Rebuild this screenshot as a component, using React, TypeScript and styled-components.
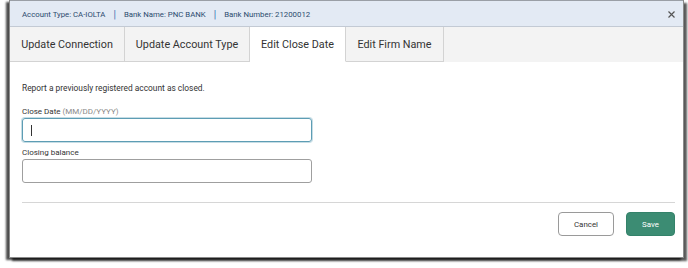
import React from "react";
import styled, { createGlobalStyle } from "styled-components";

const Global = createGlobalStyle`
  html, body { margin: 0; padding: 0; background: #ffffff; }
  body { font-family: Roboto, "Liberation Sans", Arial, sans-serif; }
  * { box-sizing: border-box; }
`;

const Stage = styled.div`
  width: 688px;
  height: 268px;
  padding-left: 9px;
  overflow: hidden;
`;

const Modal = styled.div`
  width: 675px;
  height: 258px;
  background: #ffffff;
  border: 1px solid #8a8a8a;
  border-top: none;
  box-shadow: -3px 2px 2px rgba(0, 0, 0, 0.7), 3px 3px 2px rgba(0, 0, 0, 0.65);
  display: flex;
  flex-direction: column;
`;

const InfoBar = styled.div`
  height: 27px;
  flex: none;
  background: #e3eaf4;
  border-top: 1px solid #9a9fa6;
  border-bottom: 1px solid #c3cad4;
  display: flex;
  align-items: center;
  padding: 1px 7px 0 12px;
  font-size: 7.8px;
  color: #2c4a6e;
`;

const InfoItem = styled.span`
  white-space: nowrap;
`;

const Sep = styled.span`
  color: #3a6fae;
  margin: 0 8px;
  font-size: 10px;
`;

const Close = styled.button`
  margin-left: auto;
  border: none;
  background: transparent;
  padding: 0;
  width: 10px;
  height: 10px;
  display: flex;
  align-items: center;
  justify-content: center;
  cursor: pointer;
`;

const TabBar = styled.div`
  height: 35px;
  flex: none;
  background: #f3f3f3;
  display: flex;
`;

const Tab = styled.div<{ $active?: boolean; $w: number }>`
  width: ${(p) => p.$w}px;
  height: 35px;
  display: flex;
  align-items: center;
  justify-content: center;
  padding-top: 1px;
  font-size: 10.8px;
  color: #333333;
  background: ${(p) => (p.$active ? "#ffffff" : "#f3f3f3")};
  border-right: 1px solid #d3d3d3;
  border-bottom: 1px solid ${(p) => (p.$active ? "#ffffff" : "#d3d3d3")};
  white-space: nowrap;
`;

const Body = styled.div`
  flex: 1;
  display: flex;
  flex-direction: column;
  padding: 20px 8px 0 12px;
`;

const Description = styled.p`
  margin: 0 0 12px 0;
  font-size: 8.4px;
  line-height: 12px;
  color: #333333;
`;

const Label = styled.label`
  display: block;
  font-size: 8px;
  line-height: 12px;
  color: #333333;
  margin-bottom: 0;
`;

const Hint = styled.span`
  color: #8a8a8a;
`;

const Field = styled.div<{ $gap: number }>`
  margin-bottom: ${(p) => p.$gap}px;
`;

const Input = styled.div<{ $focused?: boolean }>`
  width: 290px;
  height: 24px;
  border: 1px solid ${(p) => (p.$focused ? "#5d9db4" : "#9f9f9f")};
  border-radius: 3px;
  box-shadow: ${(p) => (p.$focused ? "0 0 0 1px rgba(93,157,180,0.35)" : "none")};
  display: flex;
  align-items: center;
  padding-left: 8px;
`;

const Caret = styled.span`
  width: 1px;
  height: 11px;
  background: #333333;
`;

const Divider = styled.hr`
  margin: 19px 0 0 0;
  border: none;
  border-top: 1px solid #d6d6d6;
  width: 653px;
`;

const Actions = styled.div`
  display: flex;
  justify-content: flex-end;
  gap: 12px;
  margin-top: 9px;
  width: 653px;
`;

const Button = styled.button<{ $primary?: boolean; $w: number }>`
  width: ${(p) => p.$w}px;
  height: 24px;
  border-radius: 4px;
  font-family: Roboto, "Liberation Sans", Arial, sans-serif;
  font-size: 7.9px;
  cursor: pointer;
  border: 1px solid ${(p) => (p.$primary ? "#34826a" : "#9a9a9a")};
  background: ${(p) => (p.$primary ? "#3c8c73" : "#ffffff")};
  color: ${(p) => (p.$primary ? "#ffffff" : "#333333")};
`;

export default function App() {
  return (
    <Stage>
      <Global />
      <Modal>
        <InfoBar>
          <InfoItem>Account Type: CA-IOLTA</InfoItem>
          <Sep>|</Sep>
          <InfoItem>Bank Name: PNC BANK</InfoItem>
          <Sep>|</Sep>
          <InfoItem>Bank Number: 21200012</InfoItem>
          <Close aria-label="Close">
            <svg width="7" height="7" viewBox="0 0 7 7">
              <path d="M0.5 0.5 L6.5 6.5 M6.5 0.5 L0.5 6.5" stroke="#555" strokeWidth="1.2" />
            </svg>
          </Close>
        </InfoBar>
        <TabBar>
          <Tab $w={115}>Update Connection</Tab>
          <Tab $w={125}>Update Account Type</Tab>
          <Tab $w={96} $active>
            Edit Close Date
          </Tab>
          <Tab $w={98}>Edit Firm Name</Tab>
        </TabBar>
        <Body>
          <Description>Report a previously registered account as closed.</Description>
          <Field $gap={5}>
            <Label>
              Close Date <Hint>(MM/DD/YYYY)</Hint>
            </Label>
            <Input $focused>
              <Caret />
            </Input>
          </Field>
          <Field $gap={0}>
            <Label>Closing balance</Label>
            <Input />
          </Field>
          <Divider />
          <Actions>
            <Button $w={56}>Cancel</Button>
            <Button $w={49} $primary>
              Save
            </Button>
          </Actions>
        </Body>
      </Modal>
    </Stage>
  );
}
